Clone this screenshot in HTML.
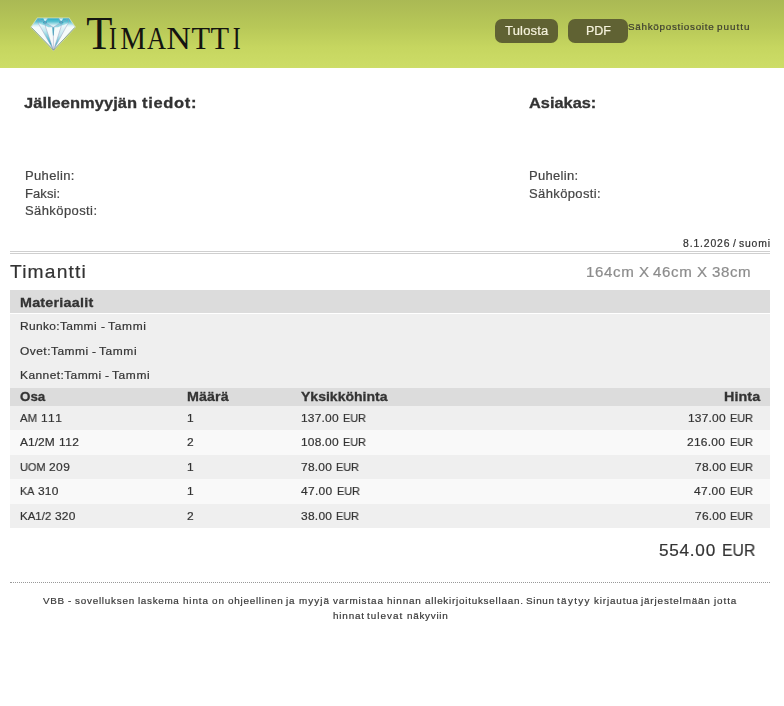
<!DOCTYPE html>
<html><head><meta charset="utf-8">
<style>
html,body{margin:0;padding:0;background:#fff;width:784px;height:706px;overflow:hidden;position:relative;}
body{font-family:"Liberation Sans",sans-serif;color:#333;}
.t{position:absolute;white-space:nowrap;line-height:1;transform-origin:0 0;will-change:transform;-webkit-text-stroke:0.2px currentColor;}
.t[style*="bold"]{-webkit-text-stroke:0.3px currentColor;}
#hdr{position:absolute;left:0;top:0;width:784px;height:68px;background:linear-gradient(to bottom,#aab954 0%,#b8c858 40%,#c6d660 70%,#cddd67 100%);}
.btn{position:absolute;top:19px;height:24px;border-radius:7px;background:#606233;}
.bg{position:absolute;left:10px;width:760px;}
</style></head><body>
<div id="hdr"></div>
<svg style="position:absolute;left:0;top:0" width="784" height="67">
<defs>
<linearGradient id="crn" x1="0" y1="18.2" x2="0" y2="27.3" gradientUnits="userSpaceOnUse"><stop offset="0" stop-color="#29afc5"/><stop offset="0.35" stop-color="#54bfd0"/><stop offset="0.8" stop-color="#d8f1f5"/><stop offset="1" stop-color="#f5fbfb"/></linearGradient>
<linearGradient id="lc" x1="1" y1="0" x2="0" y2="1"><stop offset="0" stop-color="#25aec4"/><stop offset="0.55" stop-color="#bde8ef"/><stop offset="1" stop-color="#f6fcfc"/></linearGradient>
<linearGradient id="rc" x1="0" y1="0" x2="1" y2="1"><stop offset="0" stop-color="#25aec4"/><stop offset="0.55" stop-color="#bde8ef"/><stop offset="1" stop-color="#f6fcfc"/></linearGradient>
<linearGradient id="ct" x1="0" y1="0" x2="0" y2="1"><stop offset="0" stop-color="#2ab1c6"/><stop offset="0.55" stop-color="#8fd6e2"/><stop offset="1" stop-color="#f4fbfc"/></linearGradient>
<linearGradient id="pl" x1="0" y1="0" x2="0" y2="1"><stop offset="0" stop-color="#f6fcfd"/><stop offset="0.3" stop-color="#bfe8ef"/><stop offset="0.75" stop-color="#2aadc3"/><stop offset="1" stop-color="#7fd0dc"/></linearGradient>
<linearGradient id="pr" x1="0" y1="0" x2="0" y2="1"><stop offset="0" stop-color="#f6fcfd"/><stop offset="0.45" stop-color="#bfe7ee"/><stop offset="0.8" stop-color="#44b9cc"/><stop offset="1" stop-color="#cfeef3"/></linearGradient>
</defs>
<polygon points="37.2,17.4 69.3,17.4 76,27.3 53.5,51.2 30.3,27.3" fill="#eef5cf" opacity="0.75"/>
<polygon points="37.5,18.2 69,18.2 75,27.3 53.5,50.2 31.2,27.3" fill="#f5fbfb"/>
<polygon points="37.5,18.2 69,18.2 75,27.3 31.2,27.3" fill="url(#crn)"/>
<polygon points="43.2,18.2 47.8,18.2 45,21.8" fill="#d2eff4"/>
<polygon points="58.7,18.2 63.3,18.2 61.2,21.8" fill="#d2eff4"/>
<polygon points="44.9,22.3 53.3,27.3 48.5,27.3 42,24" fill="#5cc2d3" opacity="0.6"/>
<polygon points="61.3,22.3 53.3,27.3 58,27.3 64.3,24" fill="#5cc2d3" opacity="0.6"/>
<ellipse cx="45" cy="22.3" rx="2" ry="1.4" fill="#1a9cb4" opacity="0.75"/>
<ellipse cx="61.2" cy="22.3" rx="2" ry="1.4" fill="#1a9cb4" opacity="0.75"/>
<polygon points="38.2,23 45.6,27 53.5,50.2" fill="url(#pl)"/>
<polygon points="52.3,27.3 54.3,27.3 53.8,35.5 52.9,35.5" fill="#2aabc1"/>
<polygon points="61,27 68.2,23 53.5,50.2" fill="url(#pr)"/>
<g stroke="#a09cc0" stroke-width="0.6" fill="none" opacity="0.8">
<polyline points="37.6,19 38.2,23 53.5,50.2 68.2,23 68.7,19"/>
<polyline points="44.9,22.3 45.6,27 53.5,50.2 61,27 61.3,22.3"/>
<polyline points="44.9,22.3 53.3,27.3 61.3,22.3"/>
<polyline points="53.3,27.3 53.5,50.2"/>
<polyline points="37.8,18.6 44.9,22.3 48,18.6"/>
<polyline points="58.5,18.6 61.3,22.3 68.7,18.6"/>
</g>
<polyline points="31.2,27.3 53.5,50.2 75,27.3" fill="none" stroke="#56705f" stroke-width="0.8" opacity="0.8"/>
<polygon points="37.5,18.2 69,18.2 75,27.3 53.5,50.2 31.2,27.3" fill="none" stroke="#8fb8b0" stroke-width="0.4" opacity="0.7"/>
<g font-family="Liberation Serif" fill="#141410"><text transform="translate(86.31,48.6) scale(0.932,1)" font-size="46">T</text><text transform="translate(108.96,48.6) scale(0.761,1)" font-size="31">I</text><text transform="translate(120.36,48.6) scale(0.932,1)" font-size="31">M</text><text transform="translate(147.04,48.6) scale(0.851,1)" font-size="31">A</text><text transform="translate(166.21,48.6) scale(1.101,1)" font-size="31">N</text><text transform="translate(191.46,48.6) scale(0.983,1)" font-size="31">T</text><text transform="translate(210.46,48.6) scale(0.983,1)" font-size="31">T</text><text transform="translate(232.66,48.6) scale(0.761,1)" font-size="31">I</text></g>
</svg>
<div class="btn" style="left:495px;width:63px;"></div>
<div class="btn" style="left:568px;width:60px;"></div>
<div style="position:absolute;left:10px;top:251px;width:760px;height:0;border-top:1px solid #cfcfcf;"></div>
<div style="position:absolute;left:10px;top:253px;width:760px;height:0;border-top:1px solid #cfcfcf;"></div>
<div class="bg" style="top:290px;height:23px;background:#dcdcdc"></div>
<div class="bg" style="top:314px;height:74px;background:#efefef"></div>
<div class="bg" style="top:388px;height:18px;background:#dcdcdc"></div>
<div class="bg" style="top:406px;height:24px;background:#efefef"></div>
<div class="bg" style="top:430px;height:25px;background:#f9f9f9"></div>
<div class="bg" style="top:455px;height:24px;background:#efefef"></div>
<div class="bg" style="top:479px;height:25px;background:#f9f9f9"></div>
<div class="bg" style="top:504px;height:24px;background:#efefef"></div>
<div style="position:absolute;left:10px;top:582px;width:760px;height:0;border-top:1px dotted #999;"></div>
<div class="t" style="left:24.29px;top:95.40px;font-size:15px;letter-spacing:0.02px;transform:scaleX(1.1000);font-weight:bold;">Jälleenmyyjän</div>
<div class="t" style="left:142.14px;top:95.40px;font-size:15px;letter-spacing:0.61px;transform:scaleX(1.1000);font-weight:bold;">tiedot:</div>
<div class="t" style="left:528.53px;top:95.40px;font-size:15px;transform:scaleX(1.0907);font-weight:bold;">Asiakas:</div>
<div class="t" style="left:24.68px;top:170.02px;font-size:12.5px;letter-spacing:0.32px;transform:scaleX(1.0400);color:#444;">Puhelin:</div>
<div class="t" style="left:24.98px;top:187.52px;font-size:12.5px;letter-spacing:0.09px;transform:scaleX(1.0400);color:#444;">Faksi:</div>
<div class="t" style="left:24.70px;top:205.42px;font-size:12.5px;letter-spacing:0.39px;transform:scaleX(1.0400);color:#444;">Sähköposti:</div>
<div class="t" style="left:528.83px;top:170.02px;font-size:12.5px;letter-spacing:0.28px;transform:scaleX(1.0400);color:#444;">Puhelin:</div>
<div class="t" style="left:528.85px;top:187.52px;font-size:12.5px;letter-spacing:0.36px;transform:scaleX(1.0400);color:#444;">Sähköposti:</div>
<div class="t" style="left:682.66px;top:238.73px;font-size:10px;letter-spacing:0.83px;transform:scaleX(1.0400);">8.1.2026</div>
<div class="t" style="left:733.04px;top:238.73px;font-size:10px;transform:scaleX(1.0400);">/</div>
<div class="t" style="left:739.41px;top:238.73px;font-size:10px;letter-spacing:0.78px;transform:scaleX(1.0400);">suomi</div>
<div class="t" style="left:9.50px;top:262.74px;font-size:18.5px;letter-spacing:1.11px;transform:scaleX(1.0400);">Timantti</div>
<div class="t" style="left:586.07px;top:265.23px;font-size:14.5px;letter-spacing:0.60px;transform:scaleX(1.0400);color:#8c8c8c;">164cm</div>
<div class="t" style="left:638.74px;top:265.23px;font-size:14.5px;transform:scaleX(1.0400);color:#8c8c8c;">X</div>
<div class="t" style="left:653.33px;top:265.23px;font-size:14.5px;letter-spacing:0.61px;transform:scaleX(1.0400);color:#8c8c8c;">46cm</div>
<div class="t" style="left:697.06px;top:265.23px;font-size:14.5px;transform:scaleX(1.0400);color:#8c8c8c;">X</div>
<div class="t" style="left:711.81px;top:265.23px;font-size:14.5px;letter-spacing:0.56px;transform:scaleX(1.0400);color:#8c8c8c;">38cm</div>
<div class="t" style="left:19.71px;top:296.40px;font-size:13px;letter-spacing:0.22px;transform:scaleX(1.1000);font-weight:bold;">Materiaalit</div>
<div class="t" style="left:19.55px;top:320.87px;font-size:11.5px;letter-spacing:0.33px;transform:scaleX(1.0400);">Runko:Tammi</div>
<div class="t" style="left:100.52px;top:320.87px;font-size:11.5px;transform:scaleX(1.0400);">-</div>
<div class="t" style="left:107.93px;top:320.87px;font-size:11.5px;letter-spacing:0.67px;transform:scaleX(1.0400);">Tammi</div>
<div class="t" style="left:19.68px;top:345.87px;font-size:11.5px;letter-spacing:0.46px;transform:scaleX(1.0400);">Ovet:Tammi</div>
<div class="t" style="left:92.08px;top:345.87px;font-size:11.5px;transform:scaleX(1.0400);">-</div>
<div class="t" style="left:99.41px;top:345.87px;font-size:11.5px;letter-spacing:0.56px;transform:scaleX(1.0400);">Tammi</div>
<div class="t" style="left:19.55px;top:369.87px;font-size:11.5px;letter-spacing:0.41px;transform:scaleX(1.0400);">Kannet:Tammi</div>
<div class="t" style="left:104.99px;top:369.87px;font-size:11.5px;transform:scaleX(1.0400);">-</div>
<div class="t" style="left:112.34px;top:369.87px;font-size:11.5px;letter-spacing:0.59px;transform:scaleX(1.0400);">Tammi</div>
<div class="t" style="left:19.63px;top:390.40px;font-size:13px;transform:scaleX(1.0273);font-weight:bold;">Osa</div>
<div class="t" style="left:186.71px;top:390.40px;font-size:13px;letter-spacing:0.09px;transform:scaleX(1.1000);font-weight:bold;">Määrä</div>
<div class="t" style="left:300.58px;top:390.40px;font-size:13px;transform:scaleX(1.0782);font-weight:bold;">Yksikköhinta</div>
<div class="t" style="left:723.71px;top:390.40px;font-size:13px;letter-spacing:0.08px;transform:scaleX(1.1000);font-weight:bold;">Hinta</div>
<div class="t" style="left:19.81px;top:413.07px;font-size:11.5px;transform:scaleX(0.9834);">AM</div>
<div class="t" style="left:41.12px;top:413.07px;font-size:11.5px;letter-spacing:1.28px;transform:scaleX(1.0400);">111</div>
<div class="t" style="left:187.36px;top:413.07px;font-size:11.5px;transform:scaleX(1.0400);">1</div>
<div class="t" style="left:301.11px;top:413.07px;font-size:11.5px;letter-spacing:0.19px;transform:scaleX(1.0400);">137.00</div>
<div class="t" style="left:343.06px;top:413.07px;font-size:11.5px;transform:scaleX(0.9420);">EUR</div>
<div class="t" style="left:687.81px;top:413.07px;font-size:11.5px;letter-spacing:0.19px;transform:scaleX(1.0400);">137.00</div>
<div class="t" style="left:729.76px;top:413.07px;font-size:11.5px;transform:scaleX(0.9420);">EUR</div>
<div class="t" style="left:19.78px;top:437.47px;font-size:11.5px;letter-spacing:0.04px;transform:scaleX(1.0400);">A1/2M</div>
<div class="t" style="left:58.82px;top:437.47px;font-size:11.5px;letter-spacing:0.40px;transform:scaleX(1.0400);">112</div>
<div class="t" style="left:187.20px;top:437.47px;font-size:11.5px;transform:scaleX(1.0400);">2</div>
<div class="t" style="left:301.11px;top:437.47px;font-size:11.5px;letter-spacing:0.19px;transform:scaleX(1.0400);">108.00</div>
<div class="t" style="left:343.06px;top:437.47px;font-size:11.5px;transform:scaleX(0.9420);">EUR</div>
<div class="t" style="left:687.49px;top:437.47px;font-size:11.5px;letter-spacing:0.26px;transform:scaleX(1.0400);">216.00</div>
<div class="t" style="left:729.76px;top:437.47px;font-size:11.5px;transform:scaleX(0.9420);">EUR</div>
<div class="t" style="left:19.62px;top:461.87px;font-size:11.5px;transform:scaleX(0.9532);">UOM</div>
<div class="t" style="left:49.14px;top:461.87px;font-size:11.5px;letter-spacing:0.45px;transform:scaleX(1.0400);">209</div>
<div class="t" style="left:187.36px;top:461.87px;font-size:11.5px;transform:scaleX(1.0400);">1</div>
<div class="t" style="left:301.30px;top:461.87px;font-size:11.5px;letter-spacing:0.23px;transform:scaleX(1.0400);">78.00</div>
<div class="t" style="left:336.36px;top:461.87px;font-size:11.5px;transform:scaleX(0.9420);">EUR</div>
<div class="t" style="left:694.70px;top:461.87px;font-size:11.5px;letter-spacing:0.23px;transform:scaleX(1.0400);">78.00</div>
<div class="t" style="left:729.76px;top:461.87px;font-size:11.5px;transform:scaleX(0.9420);">EUR</div>
<div class="t" style="left:19.64px;top:486.27px;font-size:11.5px;transform:scaleX(0.9325);">KA</div>
<div class="t" style="left:37.52px;top:486.27px;font-size:11.5px;letter-spacing:0.16px;transform:scaleX(1.0400);">310</div>
<div class="t" style="left:187.36px;top:486.27px;font-size:11.5px;transform:scaleX(1.0400);">1</div>
<div class="t" style="left:301.41px;top:486.27px;font-size:11.5px;letter-spacing:0.29px;transform:scaleX(1.0400);">47.00</div>
<div class="t" style="left:336.71px;top:486.27px;font-size:11.5px;transform:scaleX(0.9420);">EUR</div>
<div class="t" style="left:694.46px;top:486.27px;font-size:11.5px;letter-spacing:0.29px;transform:scaleX(1.0400);">47.00</div>
<div class="t" style="left:729.76px;top:486.27px;font-size:11.5px;transform:scaleX(0.9420);">EUR</div>
<div class="t" style="left:19.59px;top:510.67px;font-size:11.5px;transform:scaleX(0.9956);">KA1/2</div>
<div class="t" style="left:55.23px;top:510.67px;font-size:11.5px;letter-spacing:0.16px;transform:scaleX(1.0400);">320</div>
<div class="t" style="left:187.20px;top:510.67px;font-size:11.5px;transform:scaleX(1.0400);">2</div>
<div class="t" style="left:301.28px;top:510.67px;font-size:11.5px;letter-spacing:0.25px;transform:scaleX(1.0400);">38.00</div>
<div class="t" style="left:336.41px;top:510.67px;font-size:11.5px;transform:scaleX(0.9420);">EUR</div>
<div class="t" style="left:694.70px;top:510.67px;font-size:11.5px;letter-spacing:0.23px;transform:scaleX(1.0400);">76.00</div>
<div class="t" style="left:729.76px;top:510.67px;font-size:11.5px;transform:scaleX(0.9420);">EUR</div>
<div class="t" style="left:659.05px;top:541.53px;font-size:16.5px;letter-spacing:0.71px;transform:scaleX(1.0400);">554.00</div>
<div class="t" style="left:721.76px;top:541.53px;font-size:16.5px;transform:scaleX(0.9546);">EUR</div>
<div class="t" style="left:43.45px;top:596.46px;font-size:9.5px;letter-spacing:0.65px;transform:scaleX(1.0400);color:#3a3a3a;">VBB</div>
<div class="t" style="left:68.12px;top:596.46px;font-size:9.5px;transform:scaleX(1.0400);color:#3a3a3a;">-</div>
<div class="t" style="left:74.82px;top:596.46px;font-size:9.5px;letter-spacing:0.73px;transform:scaleX(1.0400);color:#3a3a3a;">sovelluksen</div>
<div class="t" style="left:138.25px;top:596.46px;font-size:9.5px;letter-spacing:0.65px;transform:scaleX(1.0400);color:#3a3a3a;">laskema</div>
<div class="t" style="left:183.41px;top:596.46px;font-size:9.5px;letter-spacing:0.84px;transform:scaleX(1.0400);color:#3a3a3a;">hinta</div>
<div class="t" style="left:212.14px;top:596.46px;font-size:9.5px;letter-spacing:1.02px;transform:scaleX(1.0400);color:#3a3a3a;">on</div>
<div class="t" style="left:227.98px;top:596.46px;font-size:9.5px;letter-spacing:0.72px;transform:scaleX(1.0400);color:#3a3a3a;">ohjeellinen</div>
<div class="t" style="left:286.39px;top:596.46px;font-size:9.5px;letter-spacing:0.84px;transform:scaleX(1.0400);color:#3a3a3a;">ja</div>
<div class="t" style="left:299.22px;top:596.46px;font-size:9.5px;letter-spacing:1.01px;transform:scaleX(1.0400);color:#3a3a3a;">myyjä</div>
<div class="t" style="left:332.69px;top:596.46px;font-size:9.5px;letter-spacing:0.85px;transform:scaleX(1.0400);color:#3a3a3a;">varmistaa</div>
<div class="t" style="left:387.11px;top:596.46px;font-size:9.5px;letter-spacing:0.79px;transform:scaleX(1.0400);color:#3a3a3a;">hinnan</div>
<div class="t" style="left:424.63px;top:596.46px;font-size:9.5px;letter-spacing:0.72px;transform:scaleX(1.0400);color:#3a3a3a;">allekirjoituksellaan.</div>
<div class="t" style="left:525.92px;top:596.46px;font-size:9.5px;letter-spacing:0.67px;transform:scaleX(1.0400);color:#3a3a3a;">Sinun</div>
<div class="t" style="left:557.46px;top:596.46px;font-size:9.5px;letter-spacing:1.29px;transform:scaleX(1.0400);color:#3a3a3a;">täytyy</div>
<div class="t" style="left:593.64px;top:596.46px;font-size:9.5px;letter-spacing:0.81px;transform:scaleX(1.0400);color:#3a3a3a;">kirjautua</div>
<div class="t" style="left:641.14px;top:596.46px;font-size:9.5px;letter-spacing:0.81px;transform:scaleX(1.0400);color:#3a3a3a;">järjestelmään</div>
<div class="t" style="left:713.62px;top:596.46px;font-size:9.5px;letter-spacing:0.87px;transform:scaleX(1.0400);color:#3a3a3a;">jotta</div>
<div class="t" style="left:332.93px;top:611.16px;font-size:9.5px;letter-spacing:0.80px;transform:scaleX(1.0400);color:#3a3a3a;">hinnat</div>
<div class="t" style="left:367.32px;top:611.16px;font-size:9.5px;letter-spacing:1.00px;transform:scaleX(1.0400);color:#3a3a3a;">tulevat</div>
<div class="t" style="left:406.56px;top:611.16px;font-size:9.5px;letter-spacing:0.70px;transform:scaleX(1.0400);color:#3a3a3a;">näkyviin</div>
<div class="t" style="left:627.81px;top:22.16px;font-size:9.5px;letter-spacing:0.67px;transform:scaleX(1.0400);color:#3d3e30;">Sähköpostiosoite</div>
<div class="t" style="left:717.34px;top:22.16px;font-size:9.5px;letter-spacing:0.95px;transform:scaleX(1.0400);color:#3d3e30;">puuttu</div>
<div class="t" style="left:504.64px;top:25.02px;font-size:12.5px;letter-spacing:0.18px;transform:scaleX(1.0400);color:#f5f2dc;">Tulosta</div>
<div class="t" style="left:585.82px;top:24.92px;font-size:12.5px;transform:scaleX(0.9906);color:#f5f2dc;">PDF</div>
</body></html>
